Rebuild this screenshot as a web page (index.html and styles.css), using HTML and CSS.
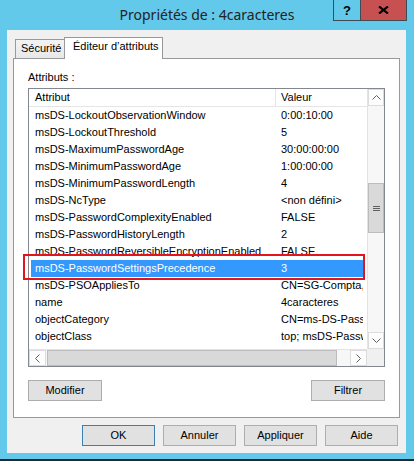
FILE: index.html
```html
<!DOCTYPE html>
<html lang="fr">
<head>
<meta charset="utf-8">
<title>Propriétés de : 4caracteres</title>
<link rel="stylesheet" href="styles.css">
</head>
<body>
<div class="titlebar">
  <div class="title">Propriétés de : 4caracteres</div>
  <div class="caption">
    <div class="cbtn help">?</div>
    <div class="cbtn close">
      <svg width="11" height="8" viewBox="0 0 11 8"><path d="M1 0.5 L10 7.5 M10 0.5 L1 7.5" stroke="#000" stroke-width="2.2" fill="none"/></svg>
    </div>
  </div>
</div>
<div class="client">
  <div class="tabs">
    <div class="tab tab-sec">Sécurité</div>
    <div class="tab tab-active">Éditeur d’attributs</div>
  </div>
  <div class="panel">
    <div class="label">Attributs :</div>
    <div class="listbox">
      <div class="viewport">
        <div class="header">
          <div class="hcell hc1">Attribut</div>
          <div class="hcell hc2">Valeur</div>
        </div>
        <div class="row"><span class="c1">msDS-LockoutObservationWindow</span><span class="c2">0:00:10:00</span></div>
        <div class="row"><span class="c1">msDS-LockoutThreshold</span><span class="c2">5</span></div>
        <div class="row"><span class="c1">msDS-MaximumPasswordAge</span><span class="c2">30:00:00:00</span></div>
        <div class="row"><span class="c1">msDS-MinimumPasswordAge</span><span class="c2">1:00:00:00</span></div>
        <div class="row"><span class="c1">msDS-MinimumPasswordLength</span><span class="c2">4</span></div>
        <div class="row"><span class="c1">msDS-NcType</span><span class="c2">&lt;non défini&gt;</span></div>
        <div class="row"><span class="c1">msDS-PasswordComplexityEnabled</span><span class="c2">FALSE</span></div>
        <div class="row"><span class="c1">msDS-PasswordHistoryLength</span><span class="c2">2</span></div>
        <div class="row"><span class="c1">msDS-PasswordReversibleEncryptionEnabled</span><span class="c2">FALSE</span></div>
        <div class="row selected"><span class="c1">msDS-PasswordSettingsPrecedence</span><span class="c2">3</span></div>
        <div class="row"><span class="c1">msDS-PSOAppliesTo</span><span class="c2">CN=SG-Compta,OU=Groupes,DC=formation,DC=local</span></div>
        <div class="row"><span class="c1">name</span><span class="c2">4caracteres</span></div>
        <div class="row"><span class="c1">objectCategory</span><span class="c2">CN=ms-DS-Password-Settings,CN=Schema,CN=Configuration</span></div>
        <div class="row"><span class="c1">objectClass</span><span class="c2">top; msDS-PasswordSettings</span></div>
        <div class="row"><span class="c1">objectGUID</span><span class="c2">6b0c2d1e-4f3a-4e8b-9c71-2a5d8e0f1b34</span></div>
      </div>
      <div class="vscroll">
        <div class="sbtn">
          <svg width="9" height="5" viewBox="0 0 9 5"><path d="M0.5 4.5 L4.5 0.5 L8.5 4.5" stroke="#606060" fill="none"/></svg>
        </div>
        <div class="vgap"></div>
        <div class="vthumb">
          <svg width="7" height="7" viewBox="0 0 7 7"><path d="M0 1.5 H7 M0 3.5 H7 M0 5.5 H7" stroke="#606060" fill="none"/></svg>
        </div>
        <div class="vrest"></div>
        <div class="sbtn">
          <svg width="9" height="5" viewBox="0 0 9 5"><path d="M0.5 0.5 L4.5 4.5 L8.5 0.5" stroke="#606060" fill="none"/></svg>
        </div>
      </div>
      <div class="hscroll">
        <div class="sbtn">
          <svg width="5" height="9" viewBox="0 0 5 9"><path d="M4.5 0.5 L0.5 4.5 L4.5 8.5" stroke="#606060" fill="none"/></svg>
        </div>
        <div class="hthumb"></div>
        <div class="hrest"></div>
        <div class="sbtn">
          <svg width="5" height="9" viewBox="0 0 5 9"><path d="M0.5 0.5 L4.5 4.5 L0.5 8.5" stroke="#606060" fill="none"/></svg>
        </div>
      </div>
      <div class="corner"></div>
    </div>
    <div class="actions">
      <div class="btn">Modifier</div>
      <div class="btn">Filtrer</div>
    </div>
    <div class="annot"></div>
  </div>
  <div class="dlgbuttons">
    <div class="btn default">OK</div>
    <div class="btn">Annuler</div>
    <div class="btn">Appliquer</div>
    <div class="btn">Aide</div>
  </div>
</div>
<div class="taskbar"></div>
</body>
</html>
```
FILE: styles.css
```css
html, body {
  margin: 0;
  padding: 0;
}
body {
  width: 414px;
  height: 461px;
  overflow: hidden;
  background: #63c9ea;
  font-family: "Liberation Sans", Arial, sans-serif;
  font-size: 11px;
  color: #000;
  display: flex;
  flex-direction: column;
}
.titlebar {
  height: 30px;
  flex: none;
  display: grid;
  grid-template-columns: 1fr auto 1fr;
}
.title {
  grid-column: 2;
  font-family: "Noto Sans", "Open Sans", sans-serif;
  font-size: 14px;
  line-height: 30px;
  color: #222;
  white-space: nowrap;
}
.caption {
  grid-column: 3;
  justify-self: end;
  align-self: start;
  margin-right: 7px;
  height: 21px;
  display: flex;
  box-sizing: border-box;
  border: 1px solid #3e4b52;
  border-top: none;
}
.cbtn {
  display: flex;
  align-items: center;
  justify-content: center;
}
.help {
  width: 27px;
  border-right: 1px solid #3e4b52;
  font-family: "Liberation Sans", Arial, sans-serif;
  font-weight: bold;
  font-size: 13px;
  padding-top: 1px;
  box-sizing: border-box;
}
.close {
  width: 45px;
  background: #c75050;
}
.client {
  flex: none;
  width: 399px;
  height: 423px;
  margin-left: 7px;
  box-sizing: border-box;
  background: #f0f0f0;
  padding: 7px 6px 7px 6px;
  display: flex;
  flex-direction: column;
}
.tabs {
  height: 21px;
  padding-left: 2px;
  display: flex;
  align-items: flex-end;
  position: relative;
  z-index: 1;
}
.tab {
  box-sizing: border-box;
  border: 1px solid #999;
  border-bottom: none;
  white-space: nowrap;
}
.tab-sec {
  width: 49px;
  height: 19px;
  border-right: none;
  padding-left: 5px;
  line-height: 17px;
  background: linear-gradient(#f3f3f3, #e8e8e8);
  margin-bottom: 0;
}
.tab-active {
  width: 99px;
  height: 22px;
  padding-left: 8px;
  line-height: 16px;
  background: #fff;
  margin-bottom: -1px;
}
.panel {
  position: relative;
  height: 360px;
  box-sizing: border-box;
  border: 1px solid #999;
  background: #fff;
  padding: 12px 14px 0 14px;
  display: flex;
  flex-direction: column;
}
.label {
  height: 13px;
  line-height: 13px;
}
.listbox {
  margin-top: 4px;
  height: 279px;
  box-sizing: border-box;
  border: 1px solid #828790;
  display: grid;
  grid-template-columns: 1fr 17px;
  grid-template-rows: 260px 17px;
}
.viewport {
  overflow: hidden;
  white-space: nowrap;
}
.header {
  display: flex;
  height: 18px;
  box-sizing: border-box;
  border-bottom: 1px solid #e5e5e5;
  line-height: 17px;
}
.hcell {
  box-sizing: border-box;
}
.hc1 {
  width: 247px;
  padding-left: 6px;
  border-right: 1px solid #e5e5e5;
}
.hc2 {
  flex: 1;
  padding-left: 5px;
}
.row {
  display: grid;
  grid-template-columns: 245px 87px;
  height: 17px;
  line-height: 17px;
  margin: 0 3px 0 2px;
}
.row span {
  overflow: hidden;
}
.c1 {
  padding-left: 4px;
}
.c2 {
  padding-left: 5px;
}
.row.selected {
  background: #3399ff;
  color: #fff;
}
.vscroll {
  display: flex;
  flex-direction: column;
  background: #f7f7f7;
  box-sizing: border-box;
  border-left: 1px solid #e3e3e3;
}
.sbtn {
  width: 17px;
  height: 17px;
  flex: none;
  box-sizing: border-box;
  border: 1px solid #dcdcdc;
  background: #fdfdfd;
  display: flex;
  align-items: center;
  justify-content: center;
}
.vscroll .sbtn {
  width: 16px;
}
.vgap {
  height: 77px;
  flex: none;
}
.vthumb {
  height: 50px;
  flex: none;
  box-sizing: border-box;
  border: 1px solid #bcbcbc;
  background: #d9d9d9;
  display: flex;
  align-items: center;
  justify-content: center;
}
.vrest {
  flex: 1;
}
.hscroll {
  display: flex;
  background: #f7f7f7;
  box-sizing: border-box;
  border-top: 1px solid #e3e3e3;
}
.hscroll .sbtn {
  height: 16px;
}
.hthumb {
  width: 290px;
  flex: none;
  box-sizing: border-box;
  border: 1px solid #bcbcbc;
  background: #d9d9d9;
  margin-left: 1px;
}
.hrest {
  flex: 1;
}
.corner {
  background: #f0f0f0;
}
.actions {
  margin-top: 13px;
  display: flex;
  justify-content: space-between;
}
.btn {
  width: 74px;
  height: 21px;
  box-sizing: border-box;
  border: 1px solid #adadad;
  background: #e1e1e1;
  line-height: 19px;
  text-align: center;
}
.btn.default {
  border-color: #3c7fb1;
}
.dlgbuttons {
  margin-top: 7px;
  margin-right: 2px;
  display: flex;
  justify-content: flex-end;
  gap: 8px;
}
.dlgbuttons .btn {
  width: 73px;
}
.annot {
  position: absolute;
  left: 9px;
  top: 195px;
  width: 342px;
  height: 26px;
  box-sizing: border-box;
  border: 2px solid #e3151c;
}
.taskbar {
  flex: none;
  margin-top: 6px;
  height: 2px;
  background: #1c2a33;
}
```
